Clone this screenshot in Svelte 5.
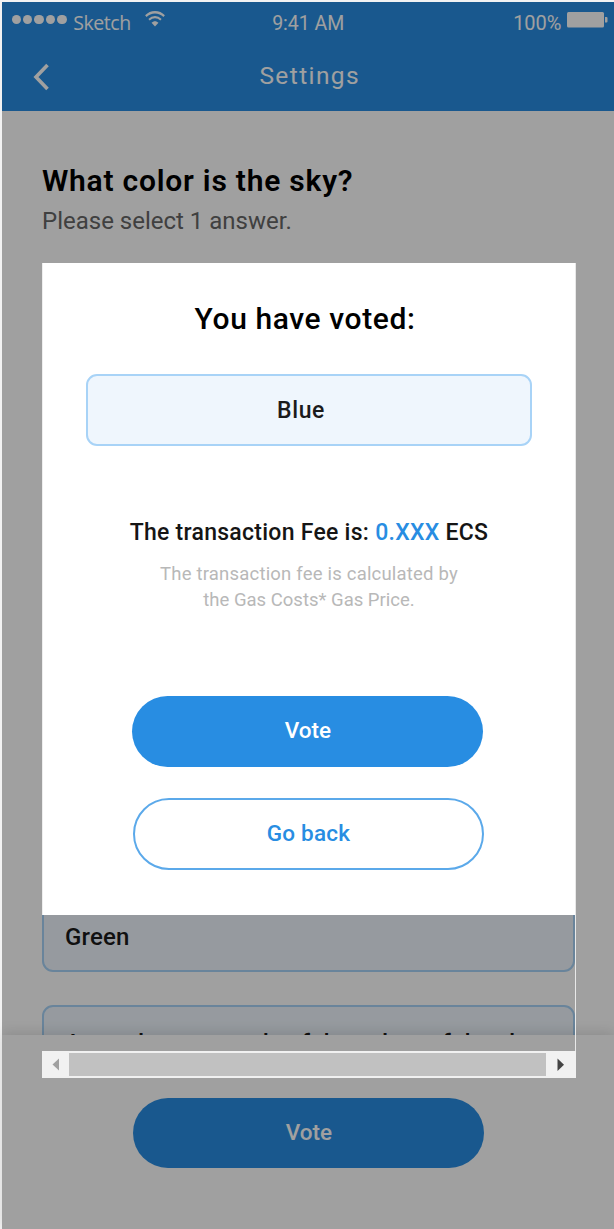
<script>
  const bars = [0, 1, 2, 3, 4];
</script>

<div class="screen">
  <div class="phone">
    <header>
      <div class="status">
        <div class="carrier">
          <span class="dots">{#each bars as b (b)}<i></i>{/each}</span>
          <span class="name">Sketch</span>
          <svg class="wifi" width="22" height="17" viewBox="0 0 24 17" preserveAspectRatio="none" fill="none" stroke="#fff">
            <path d="M2 5.2C7.5-.1 16.500-.1 22 5.200" stroke-width="2.300" />
            <path d="M5.500 8.700C9.300 5.200 14.700 5.200 18.500 8.700" stroke-width="2.200" />
            <path d="M8.200 11.800C10.400 9.700 13.600 9.700 15.800 11.800L12 15.500Z" fill="#fff" stroke="none" />
          </svg>
        </div>
        <span class="time">9:41 AM</span>
        <div class="power">
          <span class="pct">100%</span>
          <svg width="41" height="16" viewBox="0 0 41 16" fill="#fff">
            <rect x="0" y="0" width="37" height="15.500" rx="1.500" />
            <path d="M38 5h1.500a1 1 0 0 1 1 1v3.500a1 1 0 0 1-1 1H38z" />
          </svg>
        </div>
      </div>
      <div class="nav">
        <svg width="18" height="28" viewBox="0 0 18 28" fill="none" stroke="#fff" stroke-width="3.600">
          <path d="M15.500 2L4 14L15.500 26" />
        </svg>
        <span class="heading">Settings</span>
      </div>
    </header>
    <main>
      <h1>What color is the sky?</h1>
      <p class="sub">Please select 1 answer.</p>
      <div class="options">
        <div class="option"><span>Green</span></div>
        <div class="option long"><span>A very long example of the colors of the sky</span></div>
      </div>
    </main>
    <footer><button class="pill solid"><span>Vote</span></button></footer>
  </div>
  <div class="shade"></div>
  <div class="dialog">
    <section>
      <h2>You have voted:</h2>
      <div class="choice"><span>Blue</span></div>
      <p class="fee">The transaction Fee is: <b>0.XXX</b> ECS</p>
      <p class="note"><span class="n1">The transaction fee is calculated by</span><br /><span>the Gas Costs* Gas Price.</span></p>
      <button class="pill solid"><span>Vote</span></button>
      <button class="pill outline"><span>Go back</span></button>
    </section>
    <div class="gap"></div>
    <div class="scrollbar">
      <svg width="27" height="27" viewBox="0 0 27 27"><path d="M17 7.500v12L10.500 13.500z" fill="#a0a0a0" /></svg>
      <div class="thumb"></div>
      <svg width="30" height="27" viewBox="0 0 30 27"><path d="M11.500 7.500v12.500L18 13.700z" fill="#444" /></svg>
    </div>
  </div>
</div>

<style>
  :global(body) { margin: 0; background: #fff; }
  * { box-sizing: border-box; }
  h1, h2, p { margin: 0; }
  .screen {
    position: relative; width: 614px; height: 1229px; overflow: hidden;
    padding: 2px 0 0 1.500px; background: #f2f2f2;
    font-family: Roboto, "Liberation Sans", sans-serif; white-space: nowrap;
  }
  .phone { display: flex; flex-direction: column; height: 1227px; background: #fff; }
  header { flex: none; height: 109px; background: #288de2; color: #fff; }
  .status { display: grid; grid-template-columns: 1fr auto 1fr; height: 40px; }
  .carrier { display: flex; padding-left: 10px; }
  .dots { display: flex; gap: 2.300px; padding-top: 13.300px; }
  .dots i { width: 9.200px; height: 9.200px; border-radius: 50%; background: #fff; }
  .name { margin-left: 6.500px; font: 19.500px/42px "Open Sans", sans-serif; letter-spacing: -.4px; }
  .wifi { margin: 9px 0 0 13.500px; }
  .time { font-size: 19.500px; line-height: 43px; padding-left: 1px; }
  .power { display: flex; justify-content: flex-end; padding-right: 6.500px; gap: 5px; }
  .power svg { margin-top: 10px; }
  .pct { font-size: 20px; line-height: 43px; }
  .nav { display: grid; grid-template-columns: 1fr auto 1fr; height: 69px; padding: 0 30px; }
  .nav svg { margin: 20.500px 0 0 .5px; }
  .heading { font-size: 24.500px; line-height: 67px; letter-spacing: 1.400px; padding-left: 4px; }
  main { flex: 1; min-height: 0; overflow: hidden; padding: 52px 39px 0 40.500px; }
  h1 { font-size: 30px; line-height: 36px; font-weight: 600; letter-spacing: .77px; }
  .sub { margin-top: 6px; font-size: 24px; line-height: 32px; color: #666; }
  .options { display: grid; gap: 33px; margin-top: 663px; }
  .option { height: 72px; border: 2px solid #a8d3f7; border-radius: 11px; background: #eff6fd; padding: 0 21px; font-size: 24px; line-height: 70px; font-weight: 500; color: #1b1b1b; letter-spacing: .2px; }
  .long { line-height: 72px; font-size: 24px; letter-spacing: 0; }
  footer { position: relative; flex: none; height: 194px; padding: 62.500px 0 0 131.500px; background: #fff; box-shadow: 0 -3px 12px rgba(0,0,0,.12); }
  footer .pill span { padding-left: 1px; }
  .shade { position: absolute; inset: 2px 0 0 1.500px; background: rgba(0,0,0,.373); }
  .pill { display: block; width: 351px; height: 70.500px; border: 0; border-radius: 36px; padding: 0; font: 500 22.500px/68px Roboto, sans-serif; text-align: center; }
  .pill span { display: block; height: 70px; }
  .solid { background: #288de2; color: #fff; }
  .solid span { padding-left: 1px; }
  .outline { border: 2px solid #5ba9ea; background: #fff; color: #288de2; line-height: 67px; height: 72px; letter-spacing: .25px; }
  .outline span { height: 67px; }
  .dialog { position: absolute; left: 42px; top: 263px; width: 534px; height: 815px; border-right: 1px solid #e8e8e8; }
  section { height: 652px; background: #fff; padding: 36px 43px 0 43px; text-align: center; border-left: 1px solid #eee; }
  h2 { font-size: 30px; line-height: 39px; height: 38px; font-weight: 500; letter-spacing: .6px; padding-right: 8px; }
  .choice { height: 72px; margin-top: 37px; border: 2px solid #a8d3f7; border-radius: 11px; background: #eff6fd; font-size: 23px; font-weight: 500; line-height: 69px; color: #1b1b1b; letter-spacing: .6px; padding-right: 16px; }
  .fee { margin-top: 71px; font-size: 23px; line-height: 32px; font-weight: 500; color: #151515; letter-spacing: .27px; }
  .fee b { font-weight: 500; color: #288de2; }
  .note { margin-top: 12px; font-size: 18.500px; line-height: 26px; color: #b8b8b8; }
  .n1 { letter-spacing: .2px; }
  section .pill { margin: 83px auto 0 46px; }
  section .outline { margin: 31px auto 0 47px; }
  .gap { height: 136px; }
  .scrollbar { display: flex; height: 27px; background: #f1f1f1; margin-right: -1px; }
  .thumb { flex: 1; margin: 2px 0; background: #c1c1c1; }
</style>
